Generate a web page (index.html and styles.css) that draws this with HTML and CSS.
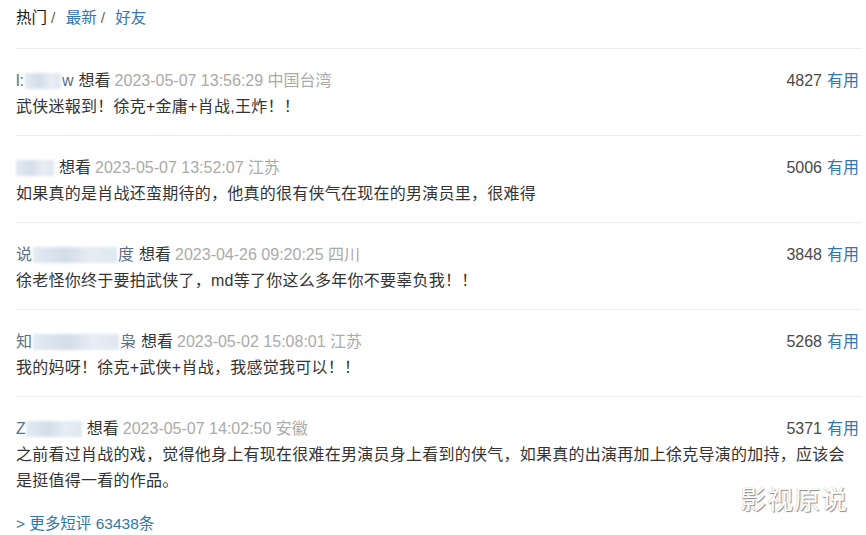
FILE: index.html
```html
<!DOCTYPE html>
<html lang="zh">
<head>
<meta charset="utf-8">
<link rel="stylesheet" href="styles.css">
</head>
<body>
<div class="page">
  <div class="tabs">
    <span class="tab active">热门</span><span class="sep">/</span>
    <a class="tab">最新</a><span class="sep">/</span>
    <a class="tab">好友</a>
  </div>

  <div class="item">
    <div class="meta">
      <div class="info"><span class="user">l:<span class="blur b1"></span>w</span><span class="status">想看</span><span class="time">2023-05-07 13:56:29 中国台湾</span></div>
      <div class="votes"><span class="count">4827</span><a class="useful">有用</a></div>
    </div>
    <p class="text">武侠迷報到！徐克+金庸+肖战,王炸！！</p>
  </div>

  <div class="item">
    <div class="meta">
      <div class="info"><span class="user"><span class="blur b2"></span></span><span class="status">想看</span><span class="time">2023-05-07 13:52:07 江苏</span></div>
      <div class="votes"><span class="count">5006</span><a class="useful">有用</a></div>
    </div>
    <p class="text">如果真的是肖战还蛮期待的，他真的很有侠气在现在的男演员里，很难得</p>
  </div>

  <div class="item">
    <div class="meta">
      <div class="info"><span class="user">说<span class="blur b3"></span>度</span><span class="status">想看</span><span class="time">2023-04-26 09:20:25 四川</span></div>
      <div class="votes"><span class="count">3848</span><a class="useful">有用</a></div>
    </div>
    <p class="text">徐老怪你终于要拍武侠了，md等了你这么多年你不要辜负我！！</p>
  </div>

  <div class="item">
    <div class="meta">
      <div class="info"><span class="user">知<span class="blur b4"></span>枭</span><span class="status">想看</span><span class="time">2023-05-02 15:08:01 江苏</span></div>
      <div class="votes"><span class="count">5268</span><a class="useful">有用</a></div>
    </div>
    <p class="text">我的妈呀！徐克+武侠+肖战，我感觉我可以！！</p>
  </div>

  <div class="item last">
    <div class="meta">
      <div class="info"><span class="user">Z<span class="blur b5"></span></span><span class="status">想看</span><span class="time">2023-05-07 14:02:50 安徽</span></div>
      <div class="votes"><span class="count">5371</span><a class="useful">有用</a></div>
    </div>
    <p class="text">之前看过肖战的戏，觉得他身上有现在很难在男演员身上看到的侠气，如果真的出演再加上徐克导演的加持，应该会是挺值得一看的作品。</p>
  </div>

  <a class="more">&gt; 更多短评 63438条</a>
</div>
<div class="watermark">影视原说</div>
</body>
</html>
```

FILE: styles.css
```css
html, body {
  margin: 0;
  padding: 0;
  background: #fff;
}
body {
  font-family: "Liberation Sans", "Noto Sans CJK SC", sans-serif;
  font-size: 16px;
  color: #333;
  width: 866px;
  height: 535px;
  overflow: hidden;
  position: relative;
}
.page {
  padding: 7px 4px 0 16px;
}
.tabs {
  line-height: 22px;
  padding-bottom: 19px;
  border-bottom: 1px solid #ececec;
  font-size: 15.5px;
}
.tab {
  color: #37a;
}
.tab.active {
  color: #111;
}
.sep {
  color: #666;
  margin: 0 6px 0 4px;
}
.item {
  padding: 21px 0 15px;
  border-bottom: 1px solid #ececec;
}
.item.last {
  border-bottom: none;
  padding-bottom: 19px;
}
.meta {
  display: flex;
  justify-content: space-between;
  align-items: center;
  line-height: 22px;
  height: 22px;
}
.info {
  display: flex;
  align-items: center;
  white-space: nowrap;
}
.user {
  color: #5a6f86;
  display: inline-flex;
  align-items: center;
  margin-right: 5px;
}
.blur {
  display: inline-block;
  height: 16px;
  background: linear-gradient(90deg, #e2ebf3, #d3dde8 40%, #e6edf4 70%, #dfe7ef);
  filter: blur(1.5px);
}
.b1 { width: 36px; margin: 0 1px; }
.b2 { width: 38px; }
.b3 { width: 84px; margin: 0 1px; }
.b4 { width: 86px; margin: 0 1px; }
.b5 { width: 56px; }
.status {
  color: #333;
  margin-right: 4px;
}
.time {
  color: #aaa;
}
.votes {
  white-space: nowrap;
  padding-right: 3px;
}
.count {
  color: #494949;
  margin-right: 5px;
}
.useful {
  color: #37a;
}
.text {
  margin: 2px 0 0;
  line-height: 26px;
  padding-right: 16px;
  letter-spacing: 0.25px;
}
.more {
  display: block;
  color: #37a;
  line-height: 22px;
  font-size: 15.5px;
}
.watermark {
  position: absolute;
  left: 740px;
  top: 484px;
  font-size: 26px;
  line-height: 32px;
  color: #fff;
  letter-spacing: 1px;
  text-shadow: 1px 1px 1px #8a8a8a, -0.5px -0.5px 0.5px #c8c8c8;
}
```
